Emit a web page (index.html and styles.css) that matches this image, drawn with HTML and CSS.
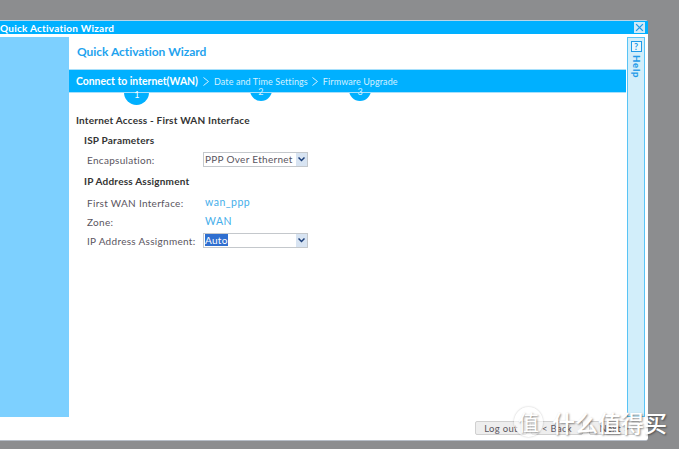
FILE: index.html
```html
<!DOCTYPE html>
<html lang="en">
  <head>
    <meta charset="UTF-8" />
    <title>Quick Activation Wizard</title>
    <link rel="stylesheet" href="styles.css">
  </head>
  <body>
    <div class="window">
      <div class="titlebar">
        <span class="titlebar-text">Quick Activation Wizard</span>
        <span class="close">
          <svg width="13" height="13" viewBox="0 0 13 13"><path d="M2.5 2.5l8 8M10.500 2.500l-8 8" stroke="#1f9be8" stroke-width="1.600" fill="none"/></svg>
        </span>
      </div>
      <div class="main">
        <div class="sidebar"></div>
        <div class="content">
          <h1 class="wizard-title">Quick Activation Wizard</h1>
          <div class="steps">
            <div class="step step-current">Connect to internet(WAN)<span class="badge badge-big">1</span></div>
            <svg class="chevron" width="6" height="9" viewBox="0 0 6 9"><path d="M.5 .5l5 4-5 4" stroke="#d4f0ff" fill="none"/></svg>
            <div class="step">Date and Time Settings<span class="badge">2</span></div>
            <svg class="chevron" width="6" height="9" viewBox="0 0 6 9"><path d="M.5 .5l5 4-5 4" stroke="#d4f0ff" fill="none"/></svg>
            <div class="step">Firmware Upgrade<span class="badge">3</span></div>
          </div>
          <h2 class="section-title">Internet Access - First WAN Interface</h2>
          <h3 class="group-title">ISP Parameters</h3>
          <div class="row row-select">
            <span class="label">Encapsulation:</span>
            <div class="select">
              <span class="select-value">PPP Over Ethernet</span>
              <span class="select-arrow"><svg width="7" height="5" viewBox="0 0 7 5"><path d="M.5 .5l3 3 3-3" stroke="#1c3f7a" stroke-width="1.500" fill="none"/></svg></span>
            </div>
          </div>
          <h3 class="group-title group-ip">IP Address Assignment</h3>
          <div class="row row-info">
            <span class="label">First WAN Interface:</span>
            <span class="value">wan_ppp</span>
          </div>
          <div class="row row-info">
            <span class="label">Zone:</span>
            <span class="value">WAN</span>
          </div>
          <div class="row row-select">
            <span class="label">IP Address Assignment:</span>
            <div class="select">
              <span class="select-value"><span class="selected-text">Auto</span></span>
              <span class="select-arrow"><svg width="7" height="5" viewBox="0 0 7 5"><path d="M.5 .5l3 3 3-3" stroke="#1c3f7a" stroke-width="1.500" fill="none"/></svg></span>
            </div>
          </div>
        </div>
        <div class="help">
          <span class="help-icon">?</span>
          <span class="help-text">Help</span>
        </div>
      </div>
      <div class="footer">
        <button class="btn btn-logout">Log out</button>
        <button class="btn btn-back">&lt; Back</button>
        <button class="btn btn-next">Next &gt;</button>
      </div>
    </div>
    <div class="watermark">
      <span class="watermark-logo">值</span>
      <span class="watermark-text">什么值得买</span>
    </div>
  </body>
</html>
```

FILE: styles.css
```css
body {
  margin: 0;
  height: 449px;
  overflow: hidden;
  position: relative;
  padding-top: 20px;
  box-sizing: border-box;
  background: #8c8d8f;
  font-family: 'Lato', sans-serif;
  color: #555;
}

.window {
  width: 648px;
  height: 421px;
  box-sizing: border-box;
  background: #fff;
  border-top: 1px solid #b9d6e8;
  border-bottom: 1px solid #b5bcc6;
  border-top-right-radius: 3px;
  border-bottom-right-radius: 3px;
}

.titlebar {
  height: 13px;
  background: #00b0ff;
  display: flex;
  align-items: center;
  justify-content: space-between;
  padding-right: 3px;
}
.titlebar-text {
  font-size: 10px;
  font-weight: 700;
  letter-spacing: 0.25px;
  color: #fff;
}
.close {
  width: 11px;
  height: 11px;
  background: #cfeaf8;
  display: flex;
  align-items: center;
  justify-content: center;
}
.close svg {
  width: 11px;
  height: 11px;
}

.main {
  display: flex;
  margin-top: 3px;
  height: 380px;
}
.sidebar {
  width: 69px;
  background: #7dd0ff;
}

.content {
  width: 557px;
  isolation: isolate;
}
.wizard-title {
  margin: 0;
  padding: 7px 0 0 8px;
  height: 25px;
  font-size: 12px;
  line-height: 15px;
  font-weight: 700;
  letter-spacing: -0.04px;
  color: #1fa3ee;
}

.steps {
  height: 22px;
  background: #00b0ff;
  border-top: 1px solid #a8e0fb;
  border-bottom: 1px solid #a8e0fb;
  display: flex;
  align-items: center;
  padding-left: 7px;
  color: #d4f0ff;
  font-size: 9px;
  letter-spacing: 0.1px;
}
.step {
  position: relative;
  white-space: nowrap;
}
.chevron {
  flex: none;
  margin: 0 5px 0 4px;
}
.step-current {
  margin-right: 1px;
  font-size: 10.400px;
  font-weight: 700;
  letter-spacing: 0;
  color: #fff;
}
.badge {
  position: absolute;
  left: 50%;
  top: 10px;
  width: 22px;
  margin-left: -11px;
  text-align: center;
  font-size: 9px;
  font-weight: 400;
  line-height: 11px;
  color: #d4f0ff;
}
/* the disc goes behind the bar, the number stays on top */
.badge::before {
  content: '';
  position: absolute;
  left: 0;
  top: -7px;
  width: 22px;
  height: 22px;
  border-radius: 50%;
  background: #00b0ff;
  z-index: -1;
}
.badge-big {
  top: 14px;
  color: #fff;
}
.badge-big::before {
  left: -1.500px;
  top: -9px;
  width: 25px;
  height: 25px;
}

.section-title {
  margin: 0;
  padding: 21px 0 0 7px;
  font-size: 10px;
  line-height: 13px;
  font-weight: 700;
  letter-spacing: 0.2px;
  color: #333;
}
.group-title {
  margin: 0;
  padding: 7px 0 0 15px;
  font-size: 10px;
  line-height: 13px;
  font-weight: 700;
  letter-spacing: 0.2px;
  color: #333;
}
.group-ip {
  padding-top: 8px;
}

.row {
  display: flex;
  align-items: center;
  padding-left: 18px;
  font-size: 10px;
  letter-spacing: 0.3px;
}
.row-select {
  margin-top: 5px;
}
.row-info {
  margin-top: 6px;
  height: 13px;
}
.group-ip + .row-info {
  margin-top: 8px;
}
.row-info + .row-select {
  margin-top: 5px;
}
.label {
  width: 116px;
  flex: none;
  color: #5a5560;
}
.value {
  margin: -1px 0 0 2px;
  font-size: 10.500px;
  letter-spacing: 0.5px;
  color: #45aeea;
}

.select {
  width: 105px;
  height: 15px;
  box-sizing: border-box;
  display: flex;
  justify-content: space-between;
  border: 1px solid #c4c8cc;
  background: #fff;
  color: #5a5560;
}
.select-value {
  padding-left: 1px;
  line-height: 12px;
  white-space: nowrap;
  overflow: hidden;
}
.selected-text {
  background: #2f6fd0;
  color: #fff;
}
.select-arrow {
  width: 11px;
  flex: none;
  background: #d8e4f2;
  display: flex;
  align-items: center;
  justify-content: center;
}

.help {
  width: 16px;
  margin-left: 1px;
  border: 1px solid #58c4f6;
  background: #d2eefa;
  display: flex;
  flex-direction: column;
  align-items: center;
  color: #1f9be8;
}
.help-icon {
  margin-top: 3px;
  width: 9px;
  height: 9px;
  border: 1px solid #1f9be8;
  background: #e9f7fd;
  font-size: 9px;
  line-height: 9px;
  font-weight: 700;
  text-align: center;
}
.help-text {
  margin-top: 3px;
  writing-mode: vertical-rl;
  font-size: 9.500px;
  font-weight: 900;
  letter-spacing: 0.8px;
}

.footer {
  display: flex;
  justify-content: flex-end;
  gap: 4px;
  padding: 4px 8px 0 0;
}
.btn {
  height: 14px;
  padding: 0;
  border: 1px solid #d0d0d0;
  border-radius: 2px;
  background: #eeeeee;
  font-family: 'Lato', sans-serif;
  font-size: 9.500px;
  line-height: 11px;
  letter-spacing: 0.3px;
  color: #5a5560;
}
.btn-logout {
  width: 52px;
}
.btn-back {
  width: 52px;
  margin-right: 2px;
}
.btn-next {
  width: 51px;
}

.watermark {
  position: absolute;
  left: 514px;
  top: 407px;
  display: flex;
  align-items: center;
  color: #fff;
  font-family: 'Noto Sans CJK SC', sans-serif;
  text-shadow: 1px 1px 2px rgba(0, 0, 0, 0.45);
}
.watermark-logo {
  width: 29px;
  height: 30px;
  margin-right: 9px;
  border-radius: 50%;
  background: rgba(255, 255, 255, 0.6);
  box-shadow: 0 0 2px rgba(0, 0, 0, 0.25);
  font-size: 21px;
  line-height: 28px;
  text-align: center;
}
.watermark-text {
  font-size: 23px;
  font-weight: 500;
  line-height: 30px;
}
```
